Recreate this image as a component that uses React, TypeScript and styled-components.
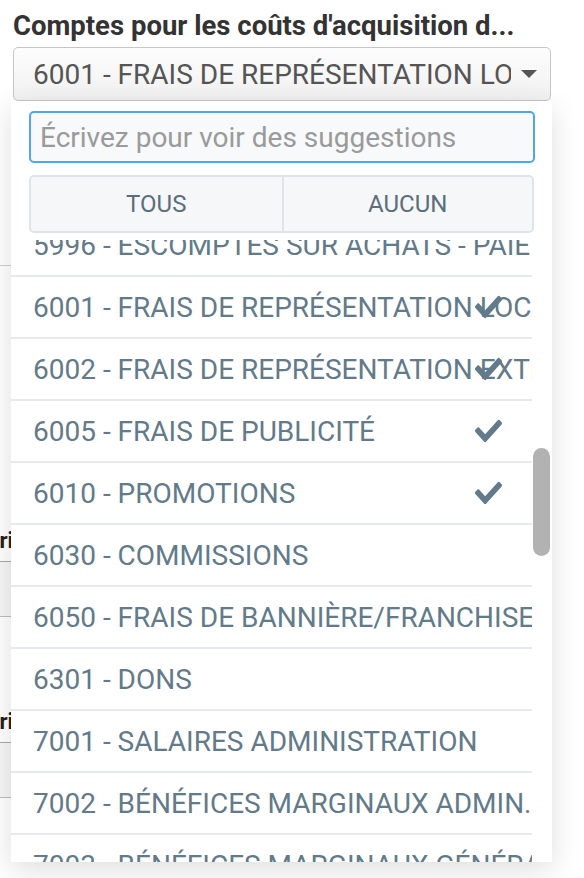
import React, { useLayoutEffect, useRef } from "react";
import styled, { createGlobalStyle } from "styled-components";

const GlobalStyle = createGlobalStyle`
  html, body {
    margin: 0;
    padding: 0;
    background: #ffffff;
    font-family: Roboto, "Liberation Sans", Arial, sans-serif;
  }
  * { box-sizing: border-box; }
`;

const Page = styled.div`
  width: 584px;
  height: 878px;
  overflow: hidden;
  padding: 10px 0 0 13px;
`;

const Field = styled.div`
  position: relative;
  width: 538px;
  z-index: 2;
`;

const FieldLabel = styled.div`
  font-size: 27.5px;
  font-weight: 700;
  color: #333333;
  line-height: 32px;
  margin-bottom: 5px;
  white-space: nowrap;
`;

const SelectButton = styled.div`
  height: 54px;
  border: 1px solid #c6c6c6;
  border-radius: 5px;
  background: linear-gradient(#fdfdfd, #f1f1f1);
  display: flex;
  align-items: center;
  padding: 0 13px 0 19px;
  gap: 10px;
`;

const SelectText = styled.span`
  flex: 1;
  min-width: 0;
  overflow: hidden;
  white-space: nowrap;
  font-size: 28px;
  color: #555555;
`;

const Caret = styled.span`
  width: 0;
  height: 0;
  border-left: 8px solid transparent;
  border-right: 8px solid transparent;
  border-top: 8px solid #555555;
`;

const Panel = styled.div`
  position: absolute;
  top: 100%;
  left: -2px;
  width: 541px;
  height: 761px;
  background: #ffffff;
  box-shadow: 0 8px 28px rgba(0, 0, 0, 0.13);
  padding-top: 10px;
  display: flex;
  flex-direction: column;
`;

const Controls = styled.div`
  padding: 0 17px 0 18px;
  display: flex;
  flex-direction: column;
  gap: 12px;
`;

const SearchInput = styled.input`
  height: 52px;
  width: 100%;
  border: 2px solid #4ea7ee;
  border-radius: 5px;
  background: #f7f9fb;
  padding: 0 9px;
  font-family: inherit;
  font-size: 28px;
  color: #333;
  outline: none;
  &::placeholder {
    color: #9a9a9a;
  }
`;

const ButtonGroup = styled.div`
  display: grid;
  grid-template-columns: 1fr 1fr;
  height: 58px;
  width: 505px;
  border: 2px solid #dfe4e8;
  border-radius: 5px;
  background: #f5f7f9;
  overflow: hidden;
`;

const GroupButton = styled.button`
  border: none;
  background: transparent;
  font-family: inherit;
  font-size: 24px;
  color: #5b6e7c;
  text-transform: uppercase;
  & + & {
    border-left: 2px solid #dfe4e8;
  }
`;

const ListWrap = styled.div`
  position: relative;
  flex: 1;
  min-height: 0;
  margin-top: 7px;
`;

const ListViewport = styled.div`
  height: 100%;
  overflow-y: scroll;
  scrollbar-width: none;
  &::-webkit-scrollbar {
    display: none;
  }
`;

const List = styled.ul`
  list-style: none;
  margin: 0;
  padding: 0;
  width: 521px;
`;

const Row = styled.li`
  position: relative;
  height: 62px;
  border-bottom: 2px solid #e5eaee;
  padding: 0 0 0 22px;
  display: flex;
  align-items: center;
  overflow: hidden;
  white-space: nowrap;
  font-size: 28px;
  color: #627a89;
`;

const Check = styled.svg`
  position: absolute;
  right: 30px;
  top: 50%;
  width: 27px;
  height: 23px;
  transform: translateY(-50%);
  fill: #627a89;
`;

const Thumb = styled.div`
  position: absolute;
  right: 2px;
  top: 208px;
  width: 17px;
  height: 108px;
  border-radius: 9px;
  background: #b2b2b2;
`;

/* Page content that lies behind the open dropdown */
const Backdrop = styled.div`
  margin-left: -13px;
  width: 500px;
  display: flex;
  flex-direction: column;
`;

const Rule = styled.div`
  margin-top: 164px;
  height: 1px;
  background: #cfcfcf;
`;

const FormBlock = styled.section<{ $space: number }>`
  margin-top: ${(p) => p.$space}px;
  display: flex;
  flex-direction: column;
  gap: 5px;
`;

const BlockLabel = styled.div`
  margin-left: -71px;
  font-size: 22px;
  line-height: 30px;
  font-weight: 700;
  color: #222;
  white-space: nowrap;
`;

const TableRow = styled.div`
  height: 56px;
  border-top: 1px solid #a9a9a9;
  border-bottom: 1px solid #bdbdbd;
  background: #f6f6f6;
`;

const items: { label: string; checked?: boolean }[] = [
  { label: "5996 - ESCOMPTES SUR ACHATS - PAIEMENT" },
  { label: "6001 - FRAIS DE REPRÉSENTATION LOCALE", checked: true },
  { label: "6002 - FRAIS DE REPRÉSENTATION EXTÉRIEURE", checked: true },
  { label: "6005 - FRAIS DE PUBLICITÉ", checked: true },
  { label: "6010 - PROMOTIONS", checked: true },
  { label: "6030 - COMMISSIONS" },
  { label: "6050 - FRAIS DE BANNIÈRE/FRANCHISE" },
  { label: "6301 - DONS" },
  { label: "7001 - SALAIRES ADMINISTRATION" },
  { label: "7002 - BÉNÉFICES MARGINAUX ADMIN." },
  { label: "7003 - BÉNÉFICES MARGINAUX GÉNÉRAUX" },
  { label: "7004 - FORMATION DU PERSONNEL" },
];

const CheckIcon = () => (
  <Check viewBox="0 60 512 392" preserveAspectRatio="none">
    <path d="M173.898 439.404l-166.4-166.4c-9.997-9.997-9.997-26.206 0-36.204l36.203-36.204c9.997-9.998 26.207-9.998 36.204 0L192 312.69 432.095 72.596c9.997-9.997 26.207-9.997 36.204 0l36.203 36.204c9.997 9.997 9.997 26.206 0 36.204l-294.4 294.401c-9.998 9.997-26.207 9.997-36.204-.001z" />
  </Check>
);

export default function App() {
  const viewportRef = useRef<HTMLDivElement>(null);
  useLayoutEffect(() => {
    if (viewportRef.current) viewportRef.current.scrollTop = 25;
  }, []);

  return (
    <>
      <GlobalStyle />
      <Page>
        <Field>
          <FieldLabel>Comptes pour les coûts d'acquisition d...</FieldLabel>
          <SelectButton>
            <SelectText>6001 - FRAIS DE REPRÉSENTATION LOCALE</SelectText>
            <Caret />
          </SelectButton>
          <Panel>
            <Controls>
              <SearchInput placeholder="Écrivez pour voir des suggestions" />
              <ButtonGroup>
                <GroupButton>Tous</GroupButton>
                <GroupButton>Aucun</GroupButton>
              </ButtonGroup>
            </Controls>
            <ListWrap>
              <ListViewport ref={viewportRef}>
                <List>
                  {items.map((it) => (
                    <Row key={it.label}>
                      {it.label}
                      {it.checked && <CheckIcon />}
                    </Row>
                  ))}
                </List>
              </ListViewport>
              <Thumb />
            </ListWrap>
          </Panel>
        </Field>
        <Backdrop>
          <Rule />
          <FormBlock $space={260}>
            <BlockLabel>Catégories</BlockLabel>
            <TableRow />
          </FormBlock>
          <FormBlock $space={90}>
            <BlockLabel>Catégories</BlockLabel>
            <TableRow />
          </FormBlock>
        </Backdrop>
      </Page>
    </>
  );
}
